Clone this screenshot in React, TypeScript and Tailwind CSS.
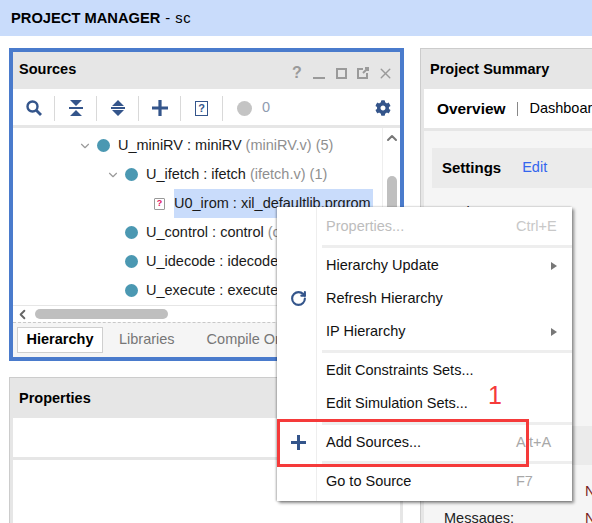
import { ChevronDown, ChevronLeft, ChevronUp, RotateCw, X } from 'lucide-react';
import { FaCog } from 'react-icons/fa';

const font = "font-['Liberation_Sans',Arial,sans-serif]";

function Tree({ indent, open, label, detail, file }: { indent: string; open?: boolean; label: string; detail?: string; file?: boolean }) {
  return (
    <div className={`flex h-[29px] items-center whitespace-nowrap text-[14.5px] ${indent}`}>
      <span className="flex w-[14px] justify-center">{open && <ChevronDown className="h-[14px] w-[14px] text-[#9a9a9a]" strokeWidth={2} />}</span>
      {file ? (
        <span className="ml-[5px] mr-[9px] flex h-[12px] w-[11px] items-center justify-center rounded-[1px] border border-solid border-[#999] text-[9px] font-bold leading-none text-[#e0115f]">?</span>
      ) : (
        <span className="ml-[5px] mr-[8px] h-[13px] w-[13px] rounded-full bg-[#4b98b2]" />
      )}
      <span className={`flex h-[29px] items-center text-[#1a1a1a] ${file ? 'w-[199px] bg-[#c9dcfb]' : ''}`}>
        {label}
        {detail && <span className="ml-[4px] text-[#8f8f8f]">{detail}</span>}
      </span>
    </div>
  );
}

function Divider() {
  return <span className="h-[25px] w-[1px] bg-[#d9d9d9]" />;
}

function ToolButton({ children }: { children: React.ReactNode }) {
  return <span className="flex w-[41px] justify-center text-[#34558b]">{children}</span>;
}

function WindowButton({ children }: { children: React.ReactNode }) {
  return <span className="flex h-[16px] w-[22px] items-center justify-center">{children}</span>;
}

function PlusIcon({ size }: { size: string }) {
  return (
    <svg viewBox="0 0 16 16" className={size} fill="#34558b">
      <path d="M6.4 0h3.2v6.4H16v3.2H9.6V16H6.4V9.6H0V6.4h6.4z" />
    </svg>
  );
}

function Item({ label, keys, arrow, disabled, icon }: { label: string; keys?: string; arrow?: boolean; disabled?: boolean; icon?: React.ReactNode }) {
  return (
    <div className="flex h-[33px] items-center text-[14.5px]">
      <span className="flex w-[42px] justify-center">{icon}</span>
      <span className={`ml-[7px] flex-1 ${disabled ? 'text-[#bdbdbd]' : 'text-[#111]'}`}>{label}</span>
      {keys && <span className={`w-[56px] ${disabled ? 'text-[#c8c8c8]' : 'text-[#a8a8a8]'}`}>{keys}</span>}
      {arrow && <span className="mr-[15px] h-0 w-0 border-y-[4px] border-l-[6px] border-solid border-y-transparent border-l-[#777]" />}
    </div>
  );
}

function MenuLine() {
  return <div className="mb-[1px] ml-[45px] mt-[2px] h-[3px] bg-[#eeeeee]" />;
}

export default function App() {
  return (
    <div className={`relative h-[523px] w-[592px] overflow-hidden bg-white ${font}`}>
      <header className="flex h-[36px] items-center bg-[#c9dcfb] pl-[11px] text-[14.7px] text-black">
        <b>PROJECT MANAGER</b>
        <span className="ml-[5px] tracking-[0.5px]">- sc</span>
      </header>

      <div className="flex items-start pl-[9px] pt-[12px]">
        <div className="w-[395px] shrink-0">
          <section className="h-[313px] border-4 border-solid border-[#4a7bcc]">
            <div className="flex h-[37px] items-center justify-between bg-[#e6e6e6] pb-[2px] pl-[6px] pr-[4px]">
              <b className="text-[14.5px] text-black">Sources</b>
              <div className="mt-[7px] flex items-center text-[#9a9a9a]">
                <WindowButton>
                  <b className="text-[16px]">?</b>
                </WindowButton>
                <WindowButton>
                  <span className="mt-[10px] h-[2px] w-[12px] bg-[#9a9a9a]" />
                </WindowButton>
                <WindowButton>
                  <span className="h-[11px] w-[11px] border-2 border-solid border-[#9a9a9a]" />
                </WindowButton>
                <WindowButton>
                  <svg viewBox="0 0 12 12" className="h-[12px] w-[12px]" fill="none" stroke="#9a9a9a" strokeWidth="2">
                    <path d="M6 2H1v9h9V6M6 6l5-5M8 1h3v3" />
                  </svg>
                </WindowButton>
                <WindowButton>
                  <X className="h-[17px] w-[17px]" strokeWidth={2} />
                </WindowButton>
              </div>
            </div>
            <div className="flex h-[39px] items-center border-b-[3px] border-solid border-[#e6e6e6] pr-[9px] pt-[2px]">
              <ToolButton>
                <svg viewBox="0 0 16 16" className="h-[16px] w-[16px]" fill="none" stroke="#34558b">
                  <circle cx="6.5" cy="6.5" r="5" strokeWidth="2.4" />
                  <path d="M10.5 10.5L15 15" strokeWidth="2.8" />
                </svg>
              </ToolButton>
              <Divider />
              <ToolButton>
                <svg viewBox="0 0 14 16" className="h-[16px] w-[14px]" fill="#34558b">
                  <path d="M1 0h12L7 6zM0 7h14v2H0zM7 10l6 6H1z" />
                </svg>
              </ToolButton>
              <Divider />
              <ToolButton>
                <svg viewBox="0 0 14 16" className="h-[16px] w-[14px]" fill="#34558b">
                  <path d="M7 0l6 6H1zM0 7h14v2H0zM1 10h12l-6 6z" />
                </svg>
              </ToolButton>
              <Divider />
              <ToolButton>
                <PlusIcon size="h-[16px] w-[16px]" />
              </ToolButton>
              <Divider />
              <ToolButton>
                <span className="flex h-[15px] w-[13px] items-center justify-center border-[1.5px] border-solid border-[#34558b] text-[11px] font-bold leading-none">?</span>
              </ToolButton>
              <Divider />
              <span className="ml-[14px] h-[15px] w-[15px] rounded-full bg-[#c4c4c4]" />
              <span className="ml-[10px] flex-1 text-[14.5px] text-[#8f9bb0]">0</span>
              <FaCog className="h-[16px] w-[16px] text-[#34558b]" />
            </div>
            <div className="flex h-[177px]">
              <div className="flex-1 overflow-hidden pt-[3px]">
                <Tree indent="pl-[65px]" open label="U_miniRV : miniRV" detail="(miniRV.v) (5)" />
                <Tree indent="pl-[93px]" open label="U_ifetch : ifetch" detail="(ifetch.v) (1)" />
                <Tree indent="pl-[122px]" file label="U0_irom : xil_defaultlib.prgrom" />
                <Tree indent="pl-[93px]" label="U_control : control" detail="(control.v)" />
                <Tree indent="pl-[93px]" label="U_idecode : idecode" detail="(idecode.v)" />
                <Tree indent="pl-[93px]" label="U_execute : execute" detail="(execute.v)" />
              </div>
              <div className="w-[18px] border-l border-solid border-[#eeeeee] pl-[1px]">
                <ChevronUp className="mt-[2px] h-[16px] w-[16px] text-[#777]" strokeWidth={3} />
                <div className="ml-[3px] mt-[30px] h-[60px] w-[10px] rounded-[5px] bg-[#bfbfbf]" />
              </div>
            </div>
            <div className="flex h-[17px] items-center border-t border-solid border-[#e6e6e6] pl-[2px]">
              <ChevronLeft className="h-[15px] w-[15px] text-[#666]" strokeWidth={3} />
              <span className="ml-[5px] h-[10px] w-[133px] rounded-[5px] bg-[#bfbfbf]" />
            </div>
            <div className="flex h-[35px] items-center gap-[16px] border-t border-dashed border-[#c8c8c8] bg-[#f5f5f5] pl-[4px] text-[14.5px] text-[#777]">
              <b className="flex h-[26px] w-[86px] items-center justify-center border border-solid border-[#cfcfcf] bg-white text-black">Hierarchy</b>
              <span>Libraries</span>
              <span className="ml-[16px] whitespace-nowrap">Compile Order</span>
            </div>
          </section>

          <section className="mt-[16px] h-[200px] w-[394px] border-l border-t border-solid border-[#cccccc]">
            <div className="h-full border-x-[3px] border-solid border-x-[#e6e6e6]">
              <div className="flex h-[40px] items-center bg-[#e6e6e6] pl-[6px] pt-[1px] text-[14.5px] font-bold text-black">Properties</div>
              <div className="h-[42px] border-b-[3px] border-solid border-[#e6e6e6]" />
            </div>
          </section>
        </div>

        <section className="ml-[16px] h-[475px] flex-1 border-l border-t border-solid border-[#cccccc]">
          <div className="h-full border-l-[3px] border-solid border-l-[#e6e6e6] bg-[#f5f5f5]">
            <div className="flex h-[40px] items-center bg-[#e6e6e6] pl-[6px] pt-[1px] text-[14.5px] font-bold text-black">Project Summary</div>
            <div className="flex h-[42px] items-center whitespace-nowrap border-b-[3px] border-solid border-[#e6e6e6] bg-white pl-[13px] text-[14.5px] text-black">
              <b className="text-[15.4px]">Overview</b>
              <span className="ml-[12px] h-[14px] w-[1px] bg-[#888]" />
              <span className="ml-[11px]">Dashboard</span>
            </div>
            <div className="ml-[8px] mt-[17px] flex h-[40px] items-center bg-[#ebebeb] pl-[10px] text-[14.5px]">
              <b className="mt-[1px] text-[15px] text-black">Settings</b>
              <span className="ml-[21px] text-[#3366ee]">Edit</span>
            </div>
            <div className="ml-[20px] mt-[13px] text-[14.5px] leading-[22px] text-[#222]">Project:</div>
            <div className="ml-[8px] mt-[203px] h-[39px] bg-[#ebebeb]" />
            <div className="ml-[161px] mt-[15px] text-[14.5px] leading-[22px] text-[#7a1f1f]">N</div>
            <div className="ml-[20px] mt-[5px] flex whitespace-nowrap text-[14.5px] leading-[22px] text-[#222]">
              <span className="w-[141px]">Messages:</span>
              <span className="text-[#7a1f1f]">N</span>
            </div>
          </div>
        </section>
      </div>

      {/* context menu */}
      <div className="absolute left-[277px] top-[207px] h-[294px] w-[295px] bg-white pt-[3px] shadow-[2px_2px_3px_rgba(0,0,0,0.45),-1px_0_2px_rgba(0,0,0,0.3)]">
        <div className="absolute bottom-0 left-[39px] top-0 w-[1px] bg-[#eeeeee]" />
        <Item label="Properties..." keys="Ctrl+E" disabled />
        <MenuLine />
        <Item label="Hierarchy Update" arrow />
        <Item label="Refresh Hierarchy" icon={<RotateCw className="h-[17px] w-[17px] text-[#34558b]" strokeWidth={3} />} />
        <Item label="IP Hierarchy" arrow />
        <MenuLine />
        <Item label="Edit Constraints Sets..." />
        <Item label="Edit Simulation Sets..." />
        <MenuLine />
        <Item label="Add Sources..." keys="Alt+A" icon={<PlusIcon size="h-[15px] w-[15px]" />} />
        <MenuLine />
        <Item label="Go to Source" keys="F7" />
      </div>

      {/* annotation drawn over the screenshot */}
      <div className="absolute left-[277px] top-[419px] h-[48px] w-[252px] border-[3px] border-solid border-[#f53a3a]" />
      <span className="absolute left-[488px] top-[381px] text-[25px] leading-[29px] text-[#f53a3a]">1</span>
    </div>
  );
}
